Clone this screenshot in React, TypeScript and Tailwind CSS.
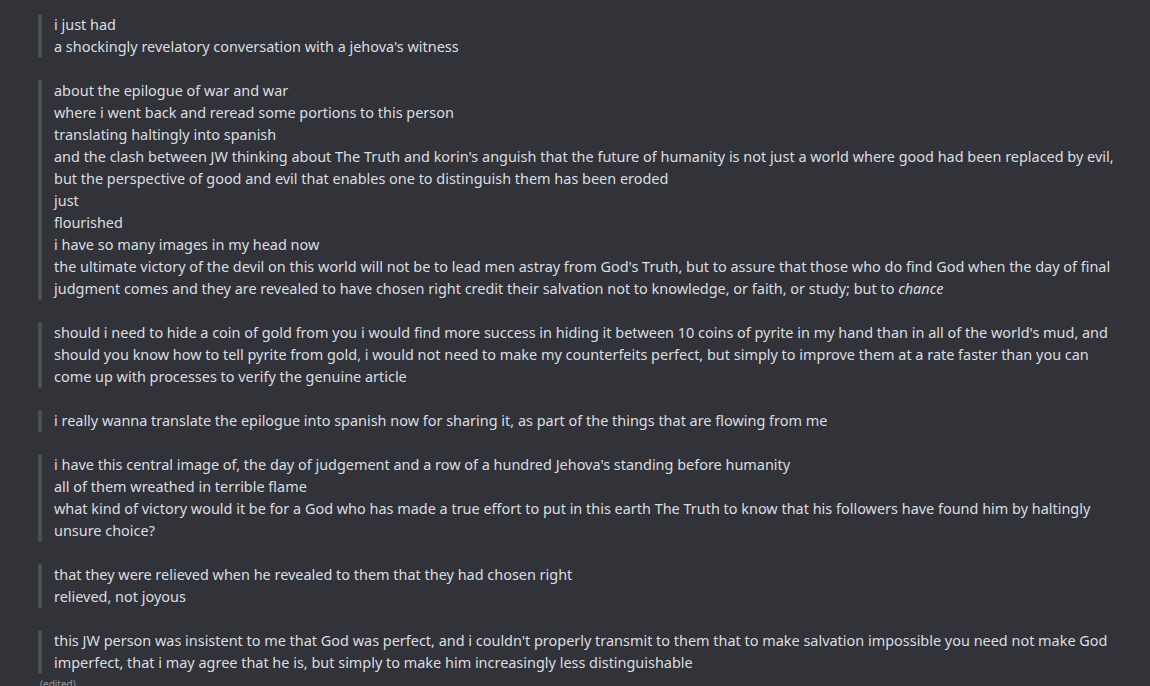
import type { FC, ReactNode } from "react";

const Quote: FC<{ children: ReactNode }> = ({ children }) => (
  <div className="flex">
    <div className="w-1 shrink-0 rounded bg-[#4e5058]" />
    <blockquote className="pl-3 min-w-0 whitespace-pre-wrap">{children}</blockquote>
  </div>
);

export default function App() {
  return (
    <div
      className="h-[686px] overflow-hidden bg-[#313338] text-[#dbdee1] text-[14.45px] leading-[22px]"
      style={{ fontFamily: '"Noto Sans", "Open Sans", sans-serif' }}
    >
      <div className="pl-[38px] pr-[30px] pt-[14px] flex flex-col gap-[22px]">
        <Quote>
          {"i just had\na shockingly revelatory conversation with a jehova's witness"}
        </Quote>
        <Quote>
          {"about the epilogue of war and war\nwhere i went back and reread some portions to this person\ntranslating haltingly into spanish\nand the clash between JW thinking about The Truth and korin's anguish that the future of humanity is not just a world where good had been replaced by evil, but the perspective of good and evil that enables one to distinguish them has been eroded\njust\nflourished\ni have so many images in my head now\nthe ultimate victory of the devil on this world will not be to lead men astray from God's Truth, but to assure that those who do find God when the day of final judgment comes and they are revealed to have chosen right credit their salvation not to knowledge, or faith, or study; but to "}
          <em>chance</em>
        </Quote>
        <Quote>
          {"should i need to hide a coin of gold from you i would find more success in hiding it between 10 coins of pyrite in my hand than in all of the world's mud, and should you know how to tell pyrite from gold, i would not need to make my counterfeits perfect, but simply to improve them at a rate faster than you can come up with processes to verify the genuine article"}
        </Quote>
        <Quote>
          {"i really wanna translate the epilogue into spanish now for sharing it, as part of the things that are flowing from me"}
        </Quote>
        <Quote>
          {"i have this central image of, the day of judgement and a row of a hundred Jehova's standing before humanity\nall of them wreathed in terrible flame\nwhat kind of victory would it be for a God who has made a true effort to put in this earth The Truth to know that his followers have found him by haltingly unsure choice?"}
        </Quote>
        <Quote>{"that they were relieved when he revealed to them that they had chosen right\nrelieved, not joyous"}</Quote>
        <div className="flex flex-col">
          <Quote>
            {"this JW person was insistent to me that God was perfect, and i couldn't properly transmit to them that to make salvation impossible you need not make God imperfect, that i may agree that he is, but simply to make him increasingly less distinguishable"}
          </Quote>
          <span className="mt-[4px] pl-[2px] text-[10px] leading-[12px] text-[#949ba4]">(edited)</span>
        </div>
      </div>
    </div>
  );
}
